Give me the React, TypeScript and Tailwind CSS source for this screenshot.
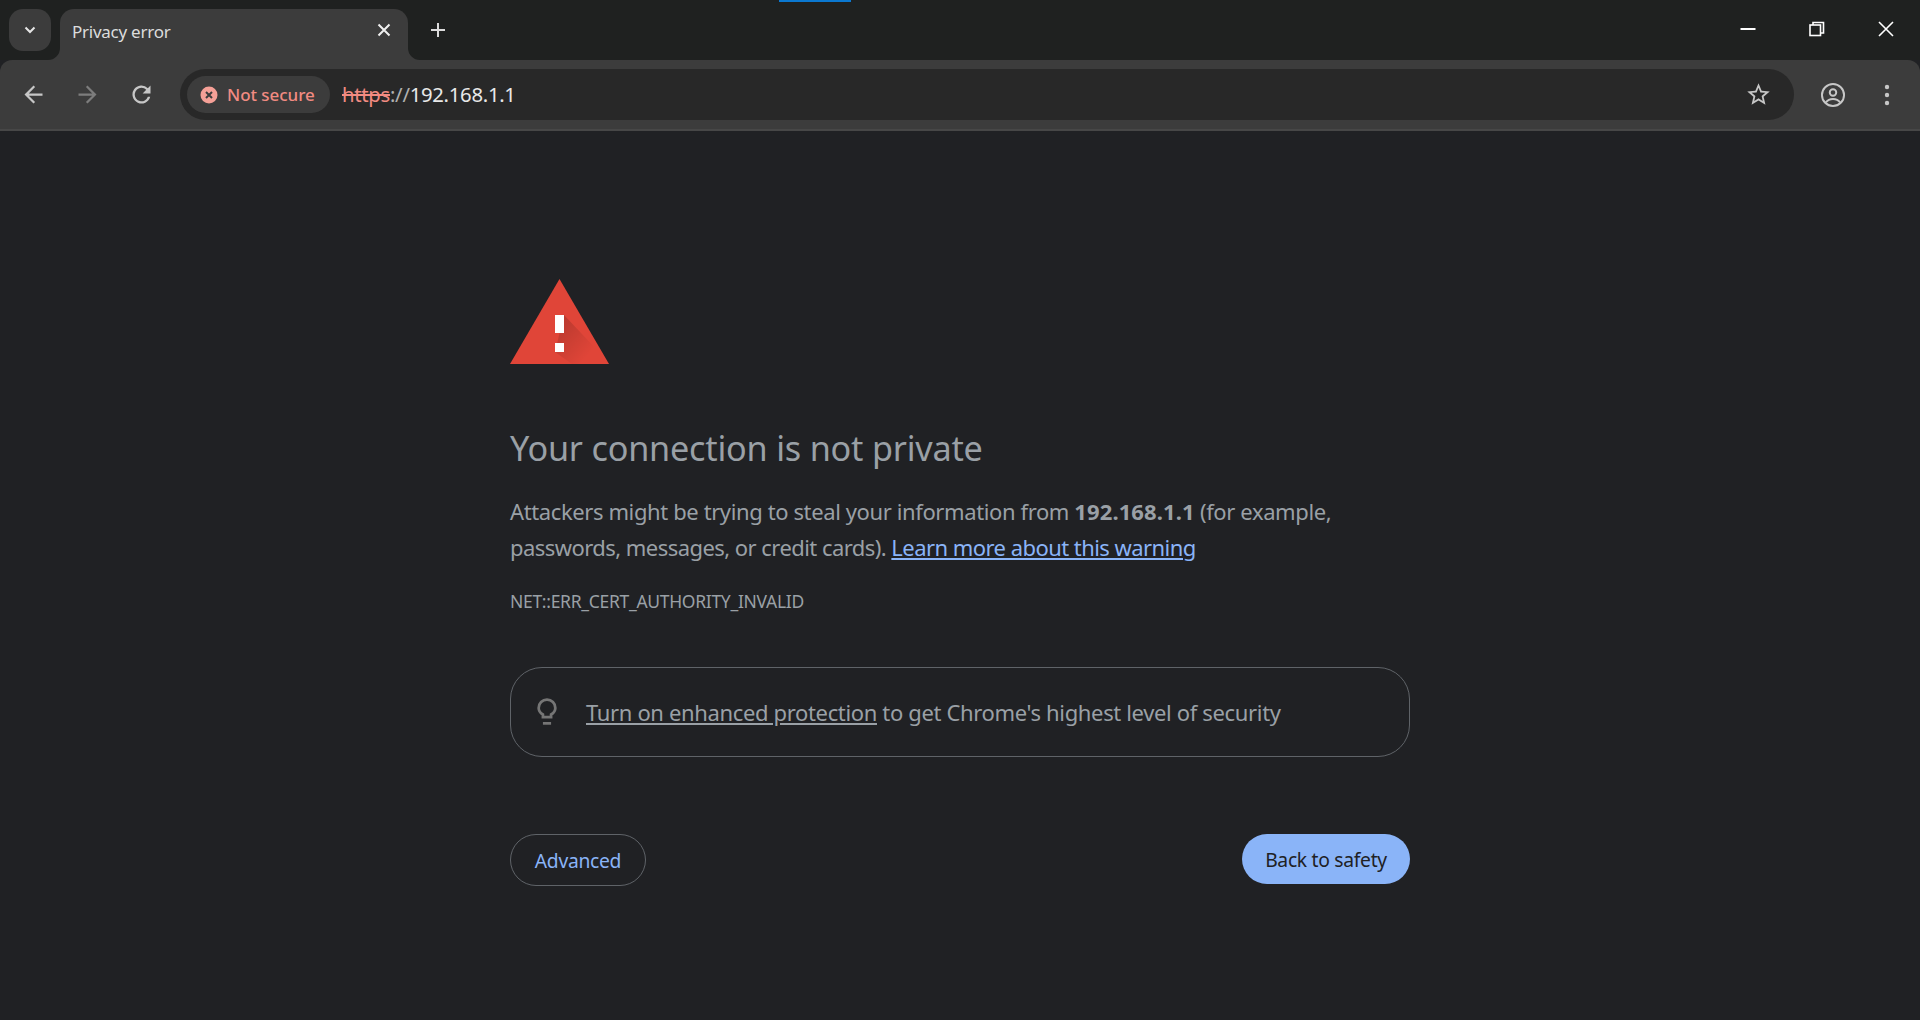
import React from 'react';

const uiFont = "font-['Noto_Sans','Open_Sans',sans-serif]";

// Tab strip at the top of the browser window
const TabStrip = () => (
  <div className="relative flex h-[60px] items-start bg-[#1f2120] text-white">
    <div className="absolute left-[779px] top-0 h-[2px] w-[72px] bg-[#0b78d0]" />
    <div className="ml-[9px] mt-[9px] flex h-[42px] w-[42px] items-center justify-center rounded-[14px] bg-[#3c3c3c]">
      <svg width="16" height="16" viewBox="0 0 16 16" fill="none" stroke="#e6e6e6" strokeWidth="2">
        <path d="M3.500 5.500L8 10l4.500-4.500" />
      </svg>
    </div>
    <div className="relative ml-[9px] mt-[9px] flex h-[51px] w-[348px] items-start rounded-t-[14px] bg-[#3c3c3c]">
      <svg className="absolute bottom-0 left-[-12px]" width="12" height="12" viewBox="0 0 12 12">
        <path d="M12 0v12H0a12 12 0 0 0 12-12z" fill="#3c3c3c" />
      </svg>
      <svg className="absolute bottom-0 right-[-12px]" width="12" height="12" viewBox="0 0 12 12">
        <path d="M0 0v12h12A12 12 0 0 1 0 0z" fill="#3c3c3c" />
      </svg>
      <span className="ml-[12px] mt-[13px] text-[17px] leading-[20px] tracking-[-0.25px] text-[#dcdcdc]">Privacy error</span>
      <svg className="absolute left-[316px] top-[13px]" width="16" height="16" viewBox="0 0 16 16" fill="none" stroke="#f0f0f0" strokeWidth="2">
        <path d="M2.500 2.500l11 11M13.500 2.500l-11 11" />
      </svg>
    </div>
    <svg className="ml-[22px] mt-[22px]" width="16" height="16" viewBox="0 0 16 16" fill="none" stroke="#dcdcdc" strokeWidth="2">
      <path d="M8 1v14M1 8h14" />
    </svg>
    <div className="ml-auto mt-[14px] flex items-center">
      <div className="flex h-[30px] w-[69px] items-center justify-center">
        <svg width="16" height="16" viewBox="0 0 16 16" stroke="#fff" strokeWidth="2"><path d="M0.500 8h15" /></svg>
      </div>
      <div className="flex h-[30px] w-[69px] items-center justify-center">
        <svg width="16" height="16" viewBox="0 0 16 16" fill="none" stroke="#fff" strokeWidth="1.600">
          <rect x="1" y="4" width="10.500" height="10.500" />
          <path d="M4 4V1.500h10.500V12H11.500" />
        </svg>
      </div>
      <div className="flex h-[30px] w-[69px] items-center justify-center">
        <svg width="16" height="16" viewBox="0 0 16 16" fill="none" stroke="#fff" strokeWidth="1.600"><path d="M1 1l14 14M15 1L1 15" /></svg>
      </div>
    </div>
  </div>
);

const Toolbar = () => (
  <div className="flex h-[71px] items-start rounded-t-[12px] border-b-2 border-b-[#474747] bg-[#3c3c3c]">
    <div className="ml-[20px] mt-[21px] flex items-center gap-[27px]">
      <svg width="27" height="27" viewBox="0 0 24 24" fill="#c7c7c7"><path d="M20 11H7.800l5.600-5.600L12 4l-8 8 8 8 1.400-1.400L7.800 13H20z" /></svg>
      <svg width="27" height="27" viewBox="0 0 24 24" fill="#7d7d7d"><path d="M4 11h12.200l-5.600-5.600L12 4l8 8-8 8-1.400-1.400 5.600-5.600H4z" /></svg>
      <svg width="27" height="27" viewBox="0 0 24 24" fill="#c7c7c7"><path d="M17.650 6.350A8 8 0 1 0 19.730 14h-2.080A6 6 0 1 1 12 6c1.660 0 3.140.69 4.220 1.780L13 11h7V4z" /></svg>
    </div>
    <div className="ml-[25px] mt-[9px] flex h-[51px] w-[1614px] items-center rounded-full bg-[#282828] pl-[7px] pr-[22px]">
      <div className="flex h-[37px] w-[143px] items-center rounded-full bg-[#3c3c3c] pl-[13px]">
        <svg width="18" height="18" viewBox="0 0 18 18">
          <circle cx="9" cy="9" r="8.500" fill="#f5a097" />
          <path d="M6 6l6 6M12 6l-6 6" stroke="#3c3c3c" strokeWidth="2" />
        </svg>
        <span className="ml-[9px] text-[17px] font-medium tracking-[-0.05px] text-[#f28b82]">Not secure</span>
      </div>
      <div className="ml-[12px] text-[20.300px] tracking-[-0.28px] text-[#e8e8e8]">
        <span className="text-[#f28b82] line-through">https</span>
        <span className="text-[#b0b0b0]">://</span>
        <span>192.168.1.1</span>
      </div>
      <svg className="ml-auto" width="27" height="27" viewBox="0 0 24 24" fill="#c7c7c7">
        <path d="M22 9.240l-7.190-.62L12 2 9.190 8.630 2 9.240l5.460 4.730L5.820 21 12 17.270 18.180 21l-1.630-7.030L22 9.240zM12 15.400l-3.760 2.270 1-4.280-3.320-2.880 4.380-.38L12 6.100l1.710 4.040 4.380.38-3.320 2.880 1 4.280L12 15.400z" />
      </svg>
    </div>
    <svg className="ml-[26px] mt-[22px]" width="26" height="26" viewBox="0 0 24 24" fill="none" stroke="#c7c7c7" strokeWidth="1.800">
      <circle cx="12" cy="12" r="10.200" />
      <circle cx="12" cy="9.600" r="3" />
      <path d="M5.400 18.800c1.600-2.200 4-3.200 6.600-3.200s5 1 6.600 3.200" />
    </svg>
    <svg className="ml-[29px] mt-[23px]" width="24" height="24" viewBox="0 0 24 24" fill="#c7c7c7">
      <circle cx="12" cy="4" r="2.200" />
      <circle cx="12" cy="12" r="2.200" />
      <circle cx="12" cy="20" r="2.200" />
    </svg>
  </div>
);

const WarningIcon = () => (
  <svg width="100" height="86" viewBox="0 0 100 86">
    <defs>
      <linearGradient id="shade" x1="0" y1="0" x2="1" y2="1">
        <stop offset="0" stopColor="#000" stopOpacity="0.2" />
        <stop offset="0.8" stopColor="#000" stopOpacity="0" />
      </linearGradient>
    </defs>
    <polygon points="49.500,0 99,85 0,85" fill="#e04538" />
    <polygon points="54,36 88,72 73,85 62,85 45,73" fill="url(#shade)" />
    <rect x="45" y="36" width="9" height="18" fill="#fff" />
    <rect x="45" y="64" width="9" height="9" fill="#fff" />
  </svg>
);

const App = () => (
  <div className={`h-[1020px] w-[1920px] overflow-hidden bg-[#202124] ${uiFont}`}>
    <TabStrip />
    <Toolbar />
    <main className="mx-auto w-[900px] pt-[148px]">
      <WarningIcon />
      <h1 className="mt-[61px] text-[34.200px] font-normal leading-[44px] tracking-[-0.2px] text-[#9aa0a6]">
        Your connection is not private
      </h1>
      <p className="mt-[23px] text-[22px] leading-[36px] text-[#9aa0a6]">
        <span className="tracking-[-0.39px]">
          Attackers might be trying to steal your information from <strong className="font-bold tracking-[0.1px]">192.168.1.1</strong> (for example,
        </span>
        <br />
        <span className="tracking-[-0.55px]">
          passwords, messages, or credit cards). <a className="text-[#8ab4f8] underline">Learn more about this warning</a>
        </span>
      </p>
      <div className="mt-[24px] text-[17.500px] leading-[24px] tracking-[-0.3px] text-[#9aa0a6]">NET::ERR_CERT_AUTHORITY_INVALID</div>
      <div className="mt-[54px] flex h-[90px] items-center rounded-[32px] border border-[#5f6368] pl-[26px]">
        <svg width="20" height="29" viewBox="0 0 22 32" fill="none" stroke="#757575" strokeWidth="3">
          <path d="M6.500 21v-2.800C3.600 16.500 1.800 13.900 1.800 11a9.200 9.200 0 0 1 18.400 0c0 2.900-1.800 5.500-4.700 7.200V21z" />
          <path d="M6.500 28h9" />
        </svg>
        <p className="ml-[29px] text-[22px] tracking-[-0.35px] text-[#9aa0a6]">
          <a className="underline">Turn on enhanced protection</a> to get Chrome's highest level of security
        </p>
      </div>
      <div className="mt-[77px] flex items-start justify-between">
        <button className="h-[52px] w-[136px] rounded-full border border-[#5f6368] pt-[2px] text-[19.300px] tracking-[-0.3px] text-[#8ab4f8]">Advanced</button>
        <button className="h-[50px] w-[168px] rounded-full bg-[#8ab4f8] pt-[2px] text-[19.300px] tracking-[-0.3px] text-[#202124]">Back to safety</button>
      </div>
    </main>
  </div>
);

export default App;
